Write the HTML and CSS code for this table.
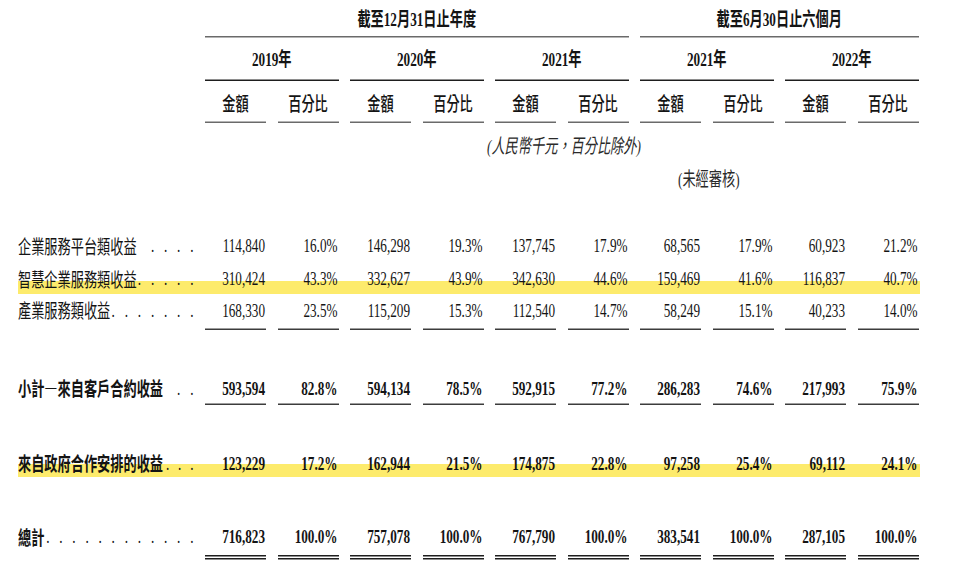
FILE: index.html
```html
<!DOCTYPE html>
<html lang="zh-Hant">
<head>
<meta charset="utf-8">
<title>收益明細</title>
<link rel="stylesheet" href="styles.css">
</head>
<body>
<div class="page">
<div class="sheet">
  <div class="grid hd-top">
    <div class="cell span-annual">截至12月31日止年度</div>
    <div class="cell span-half">截至6月30日止六個月</div>
  </div>
  <div class="grid hd-year">
    <div class="cell y1">2019年</div>
    <div class="cell">2020年</div>
    <div class="cell">2021年</div>
    <div class="cell">2021年</div>
    <div class="cell">2022年</div>
  </div>
  <div class="grid hd-sub">
    <div class="cell c2">金額</div><div class="cell">百分比</div>
    <div class="cell">金額</div><div class="cell">百分比</div>
    <div class="cell">金額</div><div class="cell">百分比</div>
    <div class="cell">金額</div><div class="cell">百分比</div>
    <div class="cell">金額</div><div class="cell">百分比</div>
  </div>
  <div class="note note-unit">(人民幣千元，百分比除外)</div>
  <div class="note note-audit">(未經審核)</div>

  <div class="grid row r1">
    <div class="c label"><span>企業服務平台類收益</span><span class="dots">....</span></div>
    <div class="c num">114,840</div><div class="c num">16.0%</div>
    <div class="c num">146,298</div><div class="c num">19.3%</div>
    <div class="c num">137,745</div><div class="c num">17.9%</div>
    <div class="c num">68,565</div><div class="c num">17.9%</div>
    <div class="c num">60,923</div><div class="c num">21.2%</div>
  </div>
  <div class="grid row r2 hl">
    <div class="c label"><span>智慧企業服務類收益</span><span class="dots">.....</span></div>
    <div class="c num">310,424</div><div class="c num">43.3%</div>
    <div class="c num">332,627</div><div class="c num">43.9%</div>
    <div class="c num">342,630</div><div class="c num">44.6%</div>
    <div class="c num">159,469</div><div class="c num">41.6%</div>
    <div class="c num">116,837</div><div class="c num">40.7%</div>
  </div>
  <div class="grid row r3 ul">
    <div class="c label"><span>產業服務類收益</span><span class="dots">.......</span></div>
    <div class="c num">168,330</div><div class="c num">23.5%</div>
    <div class="c num">115,209</div><div class="c num">15.3%</div>
    <div class="c num">112,540</div><div class="c num">14.7%</div>
    <div class="c num">58,249</div><div class="c num">15.1%</div>
    <div class="c num">40,233</div><div class="c num">14.0%</div>
  </div>
  <div class="grid row r4 ul bold">
    <div class="c label"><span>小計—來自客戶合約收益</span><span class="dots">..</span></div>
    <div class="c num">593,594</div><div class="c num">82.8%</div>
    <div class="c num">594,134</div><div class="c num">78.5%</div>
    <div class="c num">592,915</div><div class="c num">77.2%</div>
    <div class="c num">286,283</div><div class="c num">74.6%</div>
    <div class="c num">217,993</div><div class="c num">75.9%</div>
  </div>
  <div class="grid row r5 hl2 bold">
    <div class="c label"><span>來自政府合作安排的收益</span><span class="dots tight">...</span></div>
    <div class="c num">123,229</div><div class="c num">17.2%</div>
    <div class="c num">162,944</div><div class="c num">21.5%</div>
    <div class="c num">174,875</div><div class="c num">22.8%</div>
    <div class="c num">97,258</div><div class="c num">25.4%</div>
    <div class="c num">69,112</div><div class="c num">24.1%</div>
  </div>
  <div class="grid row r6 dbl bold">
    <div class="c label"><span>總計</span><span class="dots">............</span></div>
    <div class="c num">716,823</div><div class="c num">100.0%</div>
    <div class="c num">757,078</div><div class="c num">100.0%</div>
    <div class="c num">767,790</div><div class="c num">100.0%</div>
    <div class="c num">383,541</div><div class="c num">100.0%</div>
    <div class="c num">287,105</div><div class="c num">100.0%</div>
  </div>
</div>
</div>
</body>
</html>
```
FILE: styles.css
```css
html, body {
  margin: 0;
  padding: 0;
  background: #ffffff;
}

.page {
  width: 960px;
  height: 585px;
  overflow: hidden;
}

/* The printed table is rendered with a tall, narrow type; the whole sheet
   is laid out at the glyph width and stretched vertically. */
.sheet {
  width: 960px;
  transform: scaleY(1.5);
  transform-origin: 0 0;
  font-size: 13.2px;
  color: #141414;
  font-family: "Liberation Serif", "Noto Sans CJK TC", serif;
}

.grid {
  margin-left: 18px;
  width: 902px;
  display: grid;
  grid-template-columns: 175.5px repeat(10, 61px);
  column-gap: 11.5px;
}

/* ---------- header ---------- */
.hd-top .cell {
  padding: 5px 0 3px;
  line-height: 16px;
  border-bottom: 1px solid #6a6a6a;
  text-align: center;
  font-weight: 700;
}
.span-annual { grid-column: 2 / span 6; }
.span-half { grid-column: 8 / span 4; }

.hd-year .cell {
  grid-column: span 2;
  padding: 7px 0 4.5px;
  line-height: 16px;
  border-bottom: 1px solid #1e1e1e;
  text-align: center;
  font-weight: 700;
}
.hd-year .y1 { grid-column: 2 / span 2; }

.hd-sub .cell {
  padding: 7px 0 4.5px;
  line-height: 16px;
  border-bottom: 1px solid #6a6a6a;
  text-align: center;
  font-family: "Noto Sans CJK TC", sans-serif;
  font-weight: 500;
}
.hd-sub .c2 { grid-column: 2; }

.note {
  line-height: 16px;
  font-family: "Liberation Serif", "Noto Sans CJK TC", serif;
  font-style: italic;
  color: #2a2a2a;
  white-space: nowrap;
}
.note-unit { margin: 8.3px 0 0 487px; }
.note-audit { margin: 5.7px 0 0 678px; font-style: normal; }

/* ---------- body rows ---------- */
.row .c {
  padding: 2.85px 0 1.85px;
  line-height: 16px;
  border-bottom: 1px solid transparent;
}
.row .num {
  text-align: right;
  padding-right: 1px;
  font-family: "Liberation Serif", serif;
}
.row .label {
  display: flex;
  justify-content: space-between;
  white-space: nowrap;
  font-family: "Noto Sans CJK TC", sans-serif;
  font-weight: 400;
}
.dots {
  font-family: "Liberation Serif", serif;
  font-weight: 400;
  letter-spacing: 9.8px;
  margin-right: -9.8px;
}
.dots.tight {
  letter-spacing: 8.8px;
  margin-right: -8.8px;
}

.r1 { margin-top: 25.15px; }
.r3 .c { padding-bottom: 3.4px; }
.r4 { margin-top: 28.05px; }
.r4 .c { padding-bottom: 2.1px; }
.r5 { margin-top: 28.35px; }
.r6 { margin-top: 27.6px; }
.r6 .c { padding-bottom: 3.7px; border-bottom-width: 0; }

.ul .num { border-bottom-color: #3c3c3c; }
.dbl .num { border-bottom: 3.6px double #1e1e1e; }

.bold .num { font-weight: 700; }
.bold .label span:first-child { font-weight: 700; }

.hl {
  background: linear-gradient(to bottom, transparent 54.6%, #fdeb6c 54.6%, #fdeb6c 94%, transparent 94%);
}
.hl2 {
  background: linear-gradient(to bottom, transparent 51.4%, #fdeb6c 51.4%, #fdeb6c 91.4%, transparent 91.4%);
}
```
